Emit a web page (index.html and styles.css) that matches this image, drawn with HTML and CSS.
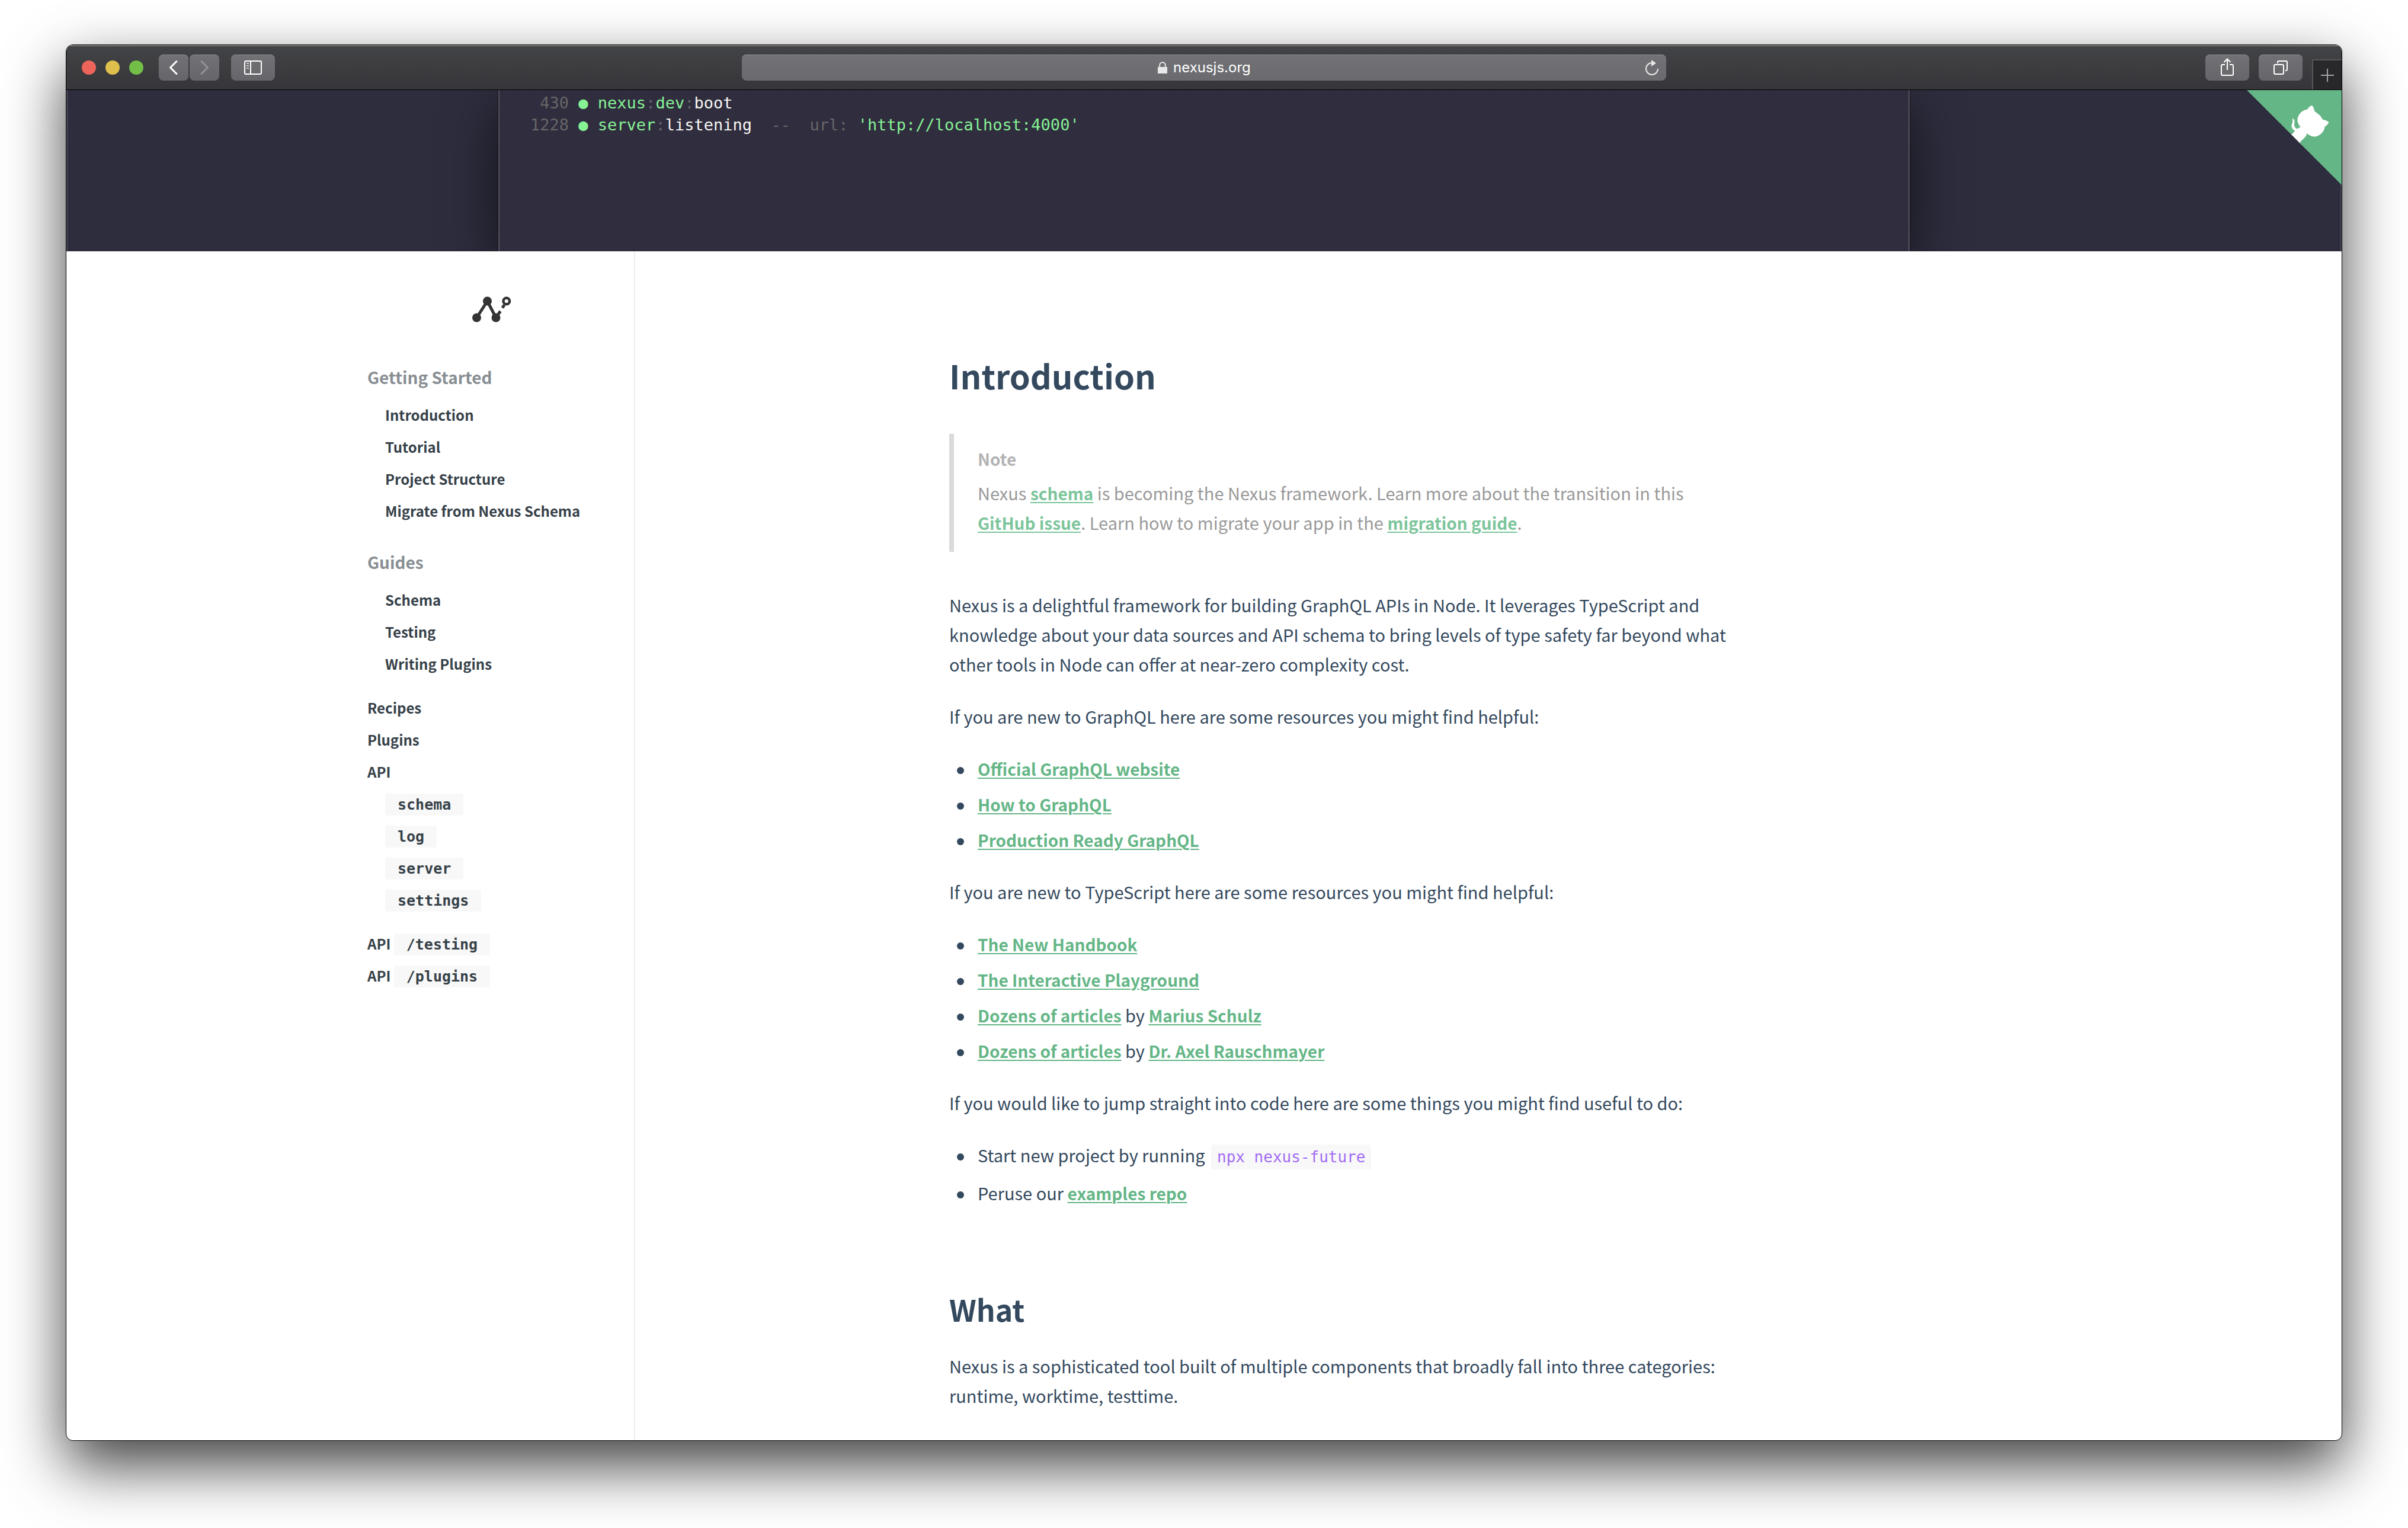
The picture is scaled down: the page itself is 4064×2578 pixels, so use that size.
FILE: index.html
```html
<!DOCTYPE html>
<html lang="en">
<head>
<meta charset="utf-8">
<title>Nexus</title>
<link rel="stylesheet" href="styles.css">
</head>
<body>
<div class="window">
  <header class="toolbar">
    <div class="toolbar-left">
      <div class="lights"><span class="light red"></span><span class="light yellow"></span><span class="light green"></span></div>
      <div class="history">
        <button class="tool narrow" type="button" aria-label="Back"><svg width="50" height="44" viewBox="0 0 50 44"><path d="M30 11.500 19.500 22 30 32.500" fill="none" stroke="#fff" stroke-width="3" stroke-linecap="round" stroke-linejoin="round"/></svg></button>
        <button class="tool narrow" type="button" aria-label="Forward" disabled><svg width="50" height="44" viewBox="0 0 50 44"><path d="M20 11.500 30.500 22 20 32.500" fill="none" stroke="#949498" stroke-width="3" stroke-linecap="round" stroke-linejoin="round"/></svg></button>
      </div>
      <button class="tool" type="button" aria-label="Sidebar"><svg width="74" height="44" viewBox="0 0 74 44" fill="none" stroke="#fff" stroke-width="2"><rect x="23" y="11" width="28" height="22" rx="2"/><path d="M33 11v22"/><path d="M26 15h4M26 19h4M26 23h4" stroke="#ccc"/></svg></button>
    </div>
    <div class="address">
      <div class="address-text">
        <svg width="16" height="20" viewBox="0 0 16 20"><path d="M0 9h16v11H0z" fill="#e8e8e8"/><path d="M3.200 9V6a4.800 4.800 0 0 1 9.600 0v3" fill="none" stroke="#e8e8e8" stroke-width="2"/></svg>
        <input class="address-input" type="text" value="nexusjs.org" aria-label="Address">
      </div>
      <button class="reload" type="button" aria-label="Reload"><svg width="24" height="28" viewBox="0 0 24 28"><path d="M12 6A10 10 0 1 0 22 16" fill="none" stroke="#e8e8e8" stroke-width="2"/><path d="M11 1v11l8-5.500z" fill="#e8e8e8"/></svg></button>
    </div>
    <div class="toolbar-right">
      <button class="tool" type="button" aria-label="Share"><svg width="74" height="44" viewBox="0 0 74 44" fill="none" stroke="#fff" stroke-width="2"><path d="M33 17h-4a2 2 0 0 0-2 2v14a2 2 0 0 0 2 2h16a2 2 0 0 0 2-2V19a2 2 0 0 0-2-2h-4M37 26V8M31.500 13 37 7.500 42.500 13"/></svg></button>
      <button class="tool" type="button" aria-label="Tab overview"><svg width="74" height="44" viewBox="0 0 74 44" fill="none" stroke="#fff" stroke-width="2"><rect x="26" y="17" width="16" height="16" rx="2"/><path d="M32 15v-2a2 2 0 0 1 2-2h12a2 2 0 0 1 2 2v12a2 2 0 0 1-2 2h-1"/></svg></button>
      <button class="new-tab" type="button" aria-label="New tab"><svg width="22" height="22" viewBox="0 0 22 22"><path d="M11 0v22M0 11h22" stroke="#a2a2a5" stroke-width="2"/></svg></button>
    </div>
  </header>

  <section class="hero">
    <div class="terminal"><pre class="log"><span class="dim"> 430</span> <span class="ok">●</span> <span class="ok">nexus</span><span class="dim">:</span><span class="ok">dev</span><span class="dim">:</span>boot
<span class="dim">1228</span> <span class="ok">●</span> <span class="ok">server</span><span class="dim">:</span>listening  <span class="dim">--  url:</span> <span class="ok">'http://localhost:4000'</span></pre></div>
    <a class="corner" href="#github" aria-label="View source on GitHub"><svg width="160" height="160" viewBox="0 0 250 250"><path d="M0,0 L115,115 L130,115 L142,142 L250,250 L250,0 Z" fill="#65b687"/><path d="M128.3,109.0 C113.8,99.7 119.0,89.6 119.0,89.6 C122.0,82.7 120.5,78.6 120.5,78.6 C119.2,72.0 123.4,76.3 123.4,76.3 C127.3,80.9 125.5,87.3 125.5,87.3 C122.9,97.6 130.6,101.9 134.4,103.2" fill="#fff"/><path d="M115.0,115.0 C114.9,115.1 118.7,116.5 119.8,115.4 L133.7,101.6 C136.9,99.2 139.9,98.4 142.2,98.6 C133.8,88.0 127.5,74.4 143.8,58.0 C148.5,53.4 154.0,51.2 159.7,51.0 C160.3,49.4 163.2,43.6 171.4,40.1 C171.4,40.1 176.1,42.5 178.8,56.2 C183.1,58.6 187.2,61.8 190.9,65.4 C194.5,69.0 197.7,73.2 200.1,77.6 C213.8,80.2 216.3,84.9 216.3,84.9 C212.7,93.1 206.9,96.0 205.4,96.6 C205.1,102.4 203.0,107.8 198.3,112.5 C181.9,128.9 168.3,122.5 157.7,114.1 C157.9,116.9 156.7,120.9 152.7,124.9 L141.0,136.5 C139.8,137.7 141.6,141.9 141.8,141.8 Z" fill="#fff"/></svg></a>
  </section>

  <div class="page">
    <aside class="sidebar">
      <a class="logo" href="#home" aria-label="Nexus"><svg width="66" height="44" viewBox="796 500 66 44"><g fill="#333"><circle cx="803.500" cy="536" r="7.500"/><circle cx="821.500" cy="508" r="7.500"/><circle cx="836" cy="536" r="7.500"/></g><g fill="none" stroke="#333"><path d="M803.500 536 821.500 508 836 536" stroke-width="5"/><path d="M836 536 843.500 525M847 519.500 850 514.500" stroke-width="5"/><circle cx="853.800" cy="508" r="5.300" stroke-width="4.400"/></g></svg></a>
      <nav class="nav">
        <h2 class="nav-title">Getting Started</h2>
        <ul>
          <li><a href="#introduction">Introduction</a></li>
          <li><a href="#tutorial">Tutorial</a></li>
          <li><a href="#structure">Project Structure</a></li>
          <li><a href="#migrate">Migrate from Nexus Schema</a></li>
        </ul>
        <h2 class="nav-title">Guides</h2>
        <ul>
          <li><a href="#guide-schema">Schema</a></li>
          <li><a href="#guide-testing">Testing</a></li>
          <li><a href="#guide-plugins">Writing Plugins</a></li>
        </ul>
        <a href="#recipes">Recipes</a>
        <a href="#plugins">Plugins</a>
        <a href="#api">API</a>
        <ul>
          <li><a href="#api-schema"><code>schema</code></a></li>
          <li><a href="#api-log"><code>log</code></a></li>
          <li><a href="#api-server"><code>server</code></a></li>
          <li><a href="#api-settings"><code>settings</code></a></li>
        </ul>
        <a href="#api-testing">API <code>/testing</code></a>
        <a href="#api-plugins">API <code>/plugins</code></a>
      </nav>
    </aside>

    <main class="content">
      <article class="article">
        <h1>Introduction</h1>
        <blockquote>
          <h3>Note</h3>
          <p>Nexus <a href="#schema">schema</a> is becoming the Nexus framework. Learn more about the transition in this <a href="#issue">GitHub issue</a>. Learn how to migrate your app in the <a href="#migration">migration guide</a>.</p>
        </blockquote>
        <p>Nexus is a delightful framework for building GraphQL APIs in Node. It leverages TypeScript and knowledge about your data sources and API schema to bring levels of type safety far beyond what other tools in Node can offer at near-zero complexity cost.</p>
        <p>If you are new to GraphQL here are some resources you might find helpful:</p>
        <ul>
          <li><a href="#graphql">Official GraphQL website</a></li>
          <li><a href="#howto">How to GraphQL</a></li>
          <li><a href="#production">Production Ready GraphQL</a></li>
        </ul>
        <p>If you are new to TypeScript here are some resources you might find helpful:</p>
        <ul>
          <li><a href="#handbook">The New Handbook</a></li>
          <li><a href="#playground">The Interactive Playground</a></li>
          <li><a href="#articles-ms">Dozens of articles</a> by <a href="#ms">Marius Schulz</a></li>
          <li><a href="#articles-ar">Dozens of articles</a> by <a href="#ar">Dr. Axel Rauschmayer</a></li>
        </ul>
        <p>If you would like to jump straight into code here are some things you might find useful to do:</p>
        <ul>
          <li>Start new project by running <code>npx nexus-future</code></li>
          <li>Peruse our <a href="#examples">examples repo</a></li>
        </ul>
        <h2>What</h2>
        <p>Nexus is a sophisticated tool built of multiple components that broadly fall into three categories: runtime, worktime, testtime.</p>
      </article>
    </main>
  </div>
</div>
</body>
</html>
```
FILE: styles.css
```css
* { box-sizing: border-box; }

body {
  margin: 0;
  padding: 75px 111px 147px;
  min-height: 100vh;
  display: flex;
  background: #fff;
  color: #34495e;
  font-family: "Noto Sans CJK SC", "Noto Sans", sans-serif;
  font-size: 29px;
  line-height: 50px;
}

h1, h2, h3, p, ul, pre, blockquote { margin: 0; padding: 0; }

button {
  border: 0;
  padding: 0;
  background: none;
  display: flex;
  align-items: center;
  justify-content: center;
}

svg { display: block; }

.window {
  flex: 1;
  min-width: 0;
  display: flex;
  flex-direction: column;
  position: relative;
  border: 1px solid #000;
  border-radius: 12px;
  overflow: hidden;
  background: #fff;
  box-shadow: 0 42px 100px rgba(0, 0, 0, 0.75);
}

/* Browser toolbar */
.toolbar {
  height: 76px;
  display: grid;
  grid-template-columns: 1fr minmax(0, 1560px) 1fr;
  align-items: center;
  background: linear-gradient(#434447, #363539);
  border-bottom: 1px solid #000;
  box-shadow: inset 0 2px #7c7e7d;
}

.toolbar-left { display: flex; gap: 20px; padding-left: 26px; }
.lights { display: flex; gap: 16px; align-items: center; margin-right: 6px; }
.light { width: 24px; height: 24px; border-radius: 50%; }
.red { background: #ed655a; }
.yellow { background: #e0c04c; }
.green { background: #72be47; }
.history { display: flex; gap: 2px; }

.tool {
  width: 74px;
  height: 44px;
  border-radius: 8px;
  background: linear-gradient(#717176, #66666a);
  box-shadow: inset 0 1px #8b8b8e;
}
.narrow { width: 50px; }

.address {
  height: 44px;
  display: grid;
  grid-template-columns: 1fr auto 1fr;
  align-items: center;
  border-radius: 8px;
  background: linear-gradient(#727276, #6b6b6f);
  box-shadow: inset 0 1px #8f8f92;
}
.address-text { grid-column: 2; display: flex; align-items: center; gap: 10px; }
.address-input {
  width: 130px;
  height: 40px;
  padding: 0;
  border: 0;
  background: none;
  color: #fff;
  font-family: Inter, "Liberation Sans", sans-serif;
  font-size: 24px;
}
.reload { justify-self: end; margin-right: 12px; }

.toolbar-right { height: 75px; display: flex; align-items: center; justify-content: flex-end; gap: 16px; }
.new-tab {
  align-self: flex-end;
  width: 50px;
  height: 51px;
  background: #28282b;
  border: solid #56565a;
  border-width: 2px 0 0 2px;
}

/* Hero with terminal */
.hero {
  position: relative;
  height: 272px;
  overflow: hidden;
  background: #2e2d3e;
  box-shadow: inset 2px 0 #4d4c5a, inset -2px 0 #4d4c5a;
}
.terminal {
  height: 100%;
  max-width: 2382px;
  margin: 0 auto;
  padding: 3px 52px;
  background: #302d3f;
  border: solid #56535f;
  border-width: 0 2px;
  box-shadow: 0 0 0 1px #111117, 0 30px 90px rgba(0, 0, 0, 0.6);
}
.log {
  color: #f8f8f2;
  font-family: "DejaVu Sans Mono", monospace;
  font-size: 27px;
  line-height: 37px;
}
.dim { color: #666; }
.ok { color: #86f394; }
.corner { position: absolute; top: 0; right: 0; }

/* Page */
.page { flex: 1; display: flex; }

.sidebar {
  flex: none;
  width: 25%;
  padding: 76px 30px 0 508px;
  border-right: 2px solid #eee;
}
.logo { display: flex; justify-content: center; margin-bottom: 53px; }

.nav { color: #364149; font-size: 24px; line-height: 54px; font-weight: 700; }
.nav a { display: block; color: inherit; text-decoration: none; white-space: nowrap; }
.nav ul { list-style: none; padding-left: 30px; margin-bottom: 20px; }
.nav-title {
  padding: 12px 0 10px;
  color: #888e93;
  font-size: 28px;
  font-weight: 700;
}

code { border-radius: 4px; background: #f8f8f8; font-family: "DejaVu Sans Mono", monospace; }
.nav code { padding: 4px 21px; font-size: 25px; line-height: 30px; font-weight: 700; }

.content { flex: 1; min-width: 0; padding: 174px 40px 0 530px; }
.article { max-width: 1340px; }
.article h1 { font-size: 56px; line-height: 70px; font-weight: 700; margin-bottom: 64px; }
.article h2 { font-size: 50px; line-height: 60px; font-weight: 700; margin: 141px 0 41px; }
.article p + p, .article p + ul, .article ul + p { margin-top: 38px; }
.article a {
  color: #65b687;
  font-size: 28px;
  line-height: 30px;
  font-weight: 700;
  text-decoration: underline 2px;
  text-underline-offset: 3px;
}
.article ul { list-style: none; padding-left: 48px; }
.article li + li { margin-top: 10px; }
.article li::before {
  content: "";
  display: inline-block;
  width: 12px;
  height: 12px;
  margin: 0 23px 0 -35px;
  border-radius: 50%;
  background: #34495e;
  vertical-align: 3px;
}
.article code { padding: 6px 10px; margin-left: 4px; font-size: 26px; color: #a36cf5; }

.article blockquote {
  margin-bottom: 64px;
  padding: 17px 40px 25px;
  border-left: 8px solid #dadada;
  color: #999;
}
.article h3 { margin-bottom: 7px; color: #b3b3b3; font-size: 28px; font-weight: 700; }
.article blockquote a { color: #7cc59b; }
```
